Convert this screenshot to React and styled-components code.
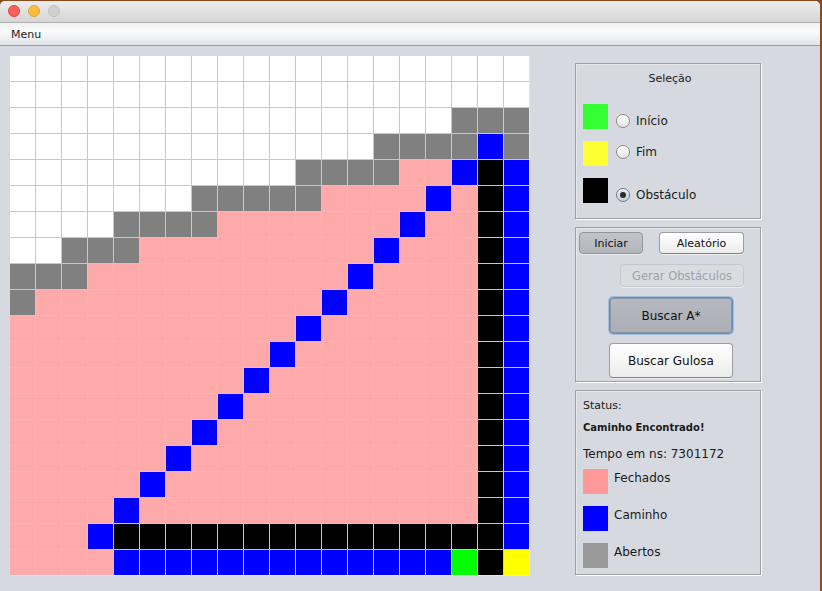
import React from "react";
import styled, { createGlobalStyle, css } from "styled-components";

const GlobalStyle = createGlobalStyle`
  html, body { margin: 0; padding: 0; }
  body {
    background: #8e4a1f;
    width: 822px;
    height: 591px;
    overflow: hidden;
    font-family: "DejaVu Sans", "Liberation Sans", sans-serif;
    color: #1a1a1a;
  }
  * { box-sizing: border-box; }
`;

const COLORS = {
  W: "#ffffff",
  G: "#808080",
  B: "#0000ff",
  K: "#000000",
  P: "#ffaaaa",
  S: "#00ff00",
  Y: "#ffff00",
};

const buildRows = () => {
  const rows = [
    "WWWWWWWWWWWWWWWWWWWW",
    "WWWWWWWWWWWWWWWWWWWW",
    "WWWWWWWWWWWWWWWWWGGG",
    "WWWWWWWWWWWWWWGGGGBG",
    "WWWWWWWWWWWGGGGPPBKB",
    "WWWWWWWGGGGGPPPPBPKB",
    "WWWWGGGGPPPPPPPBPPKB",
    "WWGGGPPPPPPPPPBPPPKB",
    "GGGPPPPPPPPPPBPPPPKB",
    "GPPPPPPPPPPPBPPPPPKB",
  ];
  for (let r = 10; r <= 17; r++) {
    const blue = 21 - r;
    let s = "";
    for (let c = 0; c < 18; c++) s += c === blue ? "B" : "P";
    rows.push(s + "KB");
  }
  rows.push("PPPBKKKKKKKKKKKKKKKB");
  rows.push("PPPPBBBBBBBBBBBBBSKY");
  return rows;
};

const GRID = buildRows();

const Window = styled.div`
  width: 820px;
  height: 590px;
  margin-top: 1px;
  background: #d6d9e0;
  border-top-left-radius: 5px;
  border-top-right-radius: 5px;
  overflow: hidden;
  display: flex;
  flex-direction: column;
`;

const TitleBar = styled.div`
  height: 22px;
  flex: none;
  display: flex;
  align-items: center;
  gap: 8px;
  padding-left: 8px;
  padding-bottom: 1px;
  background: linear-gradient(#ededed, #d5d5d5);
  border-bottom: 1px solid #b1b1b1;
`;

const Light = styled.span`
  width: 12px;
  height: 12px;
  border-radius: 50%;
  background: ${(p) => p.$color};
  border: 1px solid ${(p) => p.$edge};
`;

const MenuBar = styled.div`
  height: 23px;
  flex: none;
  display: flex;
  align-items: center;
  padding-left: 11px;
  font-size: 11px;
  color: #222;
  background: linear-gradient(#eef0f1, #fbfcfc 35%, #e9ebee 80%, #dfe2e6);
  border-bottom: 1px solid #979ba3;
`;

const Content = styled.div`
  flex: 1;
  display: flex;
  align-items: flex-start;
  padding: 10px 0 0 10px;
`;

const Board = styled.div`
  display: grid;
  grid-template-columns: repeat(20, 25px);
  grid-auto-rows: 25px;
  gap: 1px;
  background: #c8c8c8;
  box-shadow: 1px 1px 0 #e4e6ea;
`;

const Cell = styled.div`
  background: ${(p) => p.$color};
`;

const Side = styled.div`
  width: 186px;
  margin-left: 46px;
  margin-top: 7px;
  display: flex;
  flex-direction: column;
  gap: 8px;
`;

const Panel = styled.div`
  height: ${(p) => p.$h}px;
  border: 1px solid #9f9f9f;
  box-shadow: 1px 1px 0 #ffffff, inset 1px 1px 0 #e6e8ec;
  display: flex;
  flex-direction: column;
`;

const PanelTitle = styled.div`
  font-size: 11px;
  line-height: 13px;
  text-align: center;
  margin-top: 8px;
  padding-left: 4px;
`;

const SelectList = styled.div`
  display: flex;
  flex-direction: column;
  gap: 12px;
  margin-top: 19px;
  padding-left: 7px;
`;

const SelectRow = styled.div`
  display: flex;
  align-items: flex-start;
`;

const Swatch = styled.div`
  width: 25px;
  height: 25px;
  flex: none;
  background: ${(p) => p.$color};
`;

const RadioOption = styled.label`
  display: flex;
  align-items: center;
  margin-left: 8px;
  margin-top: ${(p) => p.$offset}px;
  font-size: 12px;
  line-height: 14px;
  gap: 6px;
`;

const RadioDot = styled.span`
  width: 14px;
  height: 14px;
  border-radius: 50%;
  border: 1px solid #8b8b8b;
  background: linear-gradient(#ffffff, #e3e3e3);
  display: flex;
  align-items: center;
  justify-content: center;
  box-shadow: inset 0 1px 1px rgba(255, 255, 255, 0.8);
  ${(p) =>
    p.$checked &&
    css`
      background: linear-gradient(#e4ebf3, #c3cedb);
      border-color: #6f7a88;
      &::after {
        content: "";
        width: 6px;
        height: 6px;
        border-radius: 50%;
        background: #2a2a2a;
      }
    `}
`;

const ButtonArea = styled.div`
  display: flex;
  flex-direction: column;
  align-items: flex-start;
  padding-top: 4px;
`;

const ButtonRow = styled.div`
  display: flex;
  gap: 16px;
  padding-left: 3px;
`;

const Button = styled.div`
  width: ${(p) => p.$w}px;
  height: ${(p) => p.$h}px;
  margin-left: ${(p) => p.$left || 0}px;
  margin-top: ${(p) => p.$top || 0}px;
  display: flex;
  align-items: center;
  justify-content: center;
  font-size: ${(p) => p.$fs || 12}px;
  border-radius: 4px;
  color: #111;
  border: 1px solid #9d9d9d;
  border-bottom-color: #838383;
  background: linear-gradient(#ffffff, #f6f6f6 50%, #ececec);
  box-shadow: 0 1px 0 rgba(255, 255, 255, 0.5);
  ${(p) =>
    p.$variant === "pressed" &&
    css`
      background: linear-gradient(#c1c4c9, #b3b6bc);
      border-color: #949799;
    `}
  ${(p) =>
    p.$variant === "disabled" &&
    css`
      background: #d9dce1;
      border-color: #c5c7cb;
      color: #9fa2a7;
    `}
  ${(p) =>
    p.$variant === "default" &&
    css`
      background: linear-gradient(#b6b9bf, #abaeb4);
      border: 1px solid #5f8fc7;
      box-shadow: 0 0 0 1px #9ebde3, inset 0 0 0 1px #8e939c;
    `}
`;

const StatusArea = styled.div`
  display: flex;
  flex-direction: column;
  padding: 8px 0 0 7px;
`;

const StatusLabel = styled.div`
  font-size: 11px;
  line-height: 13px;
`;

const StatusMessage = styled.div`
  font-size: 10px;
  line-height: 12px;
  font-weight: bold;
  margin-top: 10px;
`;

const TimeLabel = styled.div`
  font-size: 12px;
  line-height: 14px;
  margin-top: 13px;
`;

const Legend = styled.div`
  display: flex;
  flex-direction: column;
  gap: 12px;
  margin-top: 8px;
`;

const LegendRow = styled.div`
  display: flex;
  align-items: flex-start;
`;

const LegendText = styled.span`
  font-size: 12px;
  line-height: 14px;
  margin: 2px 0 0 6px;
`;

export default function App() {
  return (
    <>
      <GlobalStyle />
      <Window>
        <TitleBar>
          <Light $color="#fc605c" $edge="#e0443e" />
          <Light $color="#fdbc40" $edge="#dea236" />
          <Light $color="#d0d0d0" $edge="#bdbdbd" />
        </TitleBar>
        <MenuBar>Menu</MenuBar>
        <Content>
          <Board>
            {GRID.map((row, r) =>
              row.split("").map((ch, c) => <Cell key={r + "-" + c} $color={COLORS[ch]} />)
            )}
          </Board>
          <Side>
            <Panel $h={156}>
              <PanelTitle>Seleção</PanelTitle>
              <SelectList>
                <SelectRow>
                  <Swatch $color="#33ff33" />
                  <RadioOption $offset={10}>
                    <RadioDot />
                    Início
                  </RadioOption>
                </SelectRow>
                <SelectRow>
                  <Swatch $color="#ffff33" />
                  <RadioOption $offset={4}>
                    <RadioDot />
                    Fim
                  </RadioOption>
                </SelectRow>
                <SelectRow>
                  <Swatch $color="#000000" />
                  <RadioOption $offset={10}>
                    <RadioDot $checked />
                    Obstáculo
                  </RadioOption>
                </SelectRow>
              </SelectList>
            </Panel>
            <Panel $h={155}>
              <ButtonArea>
                <ButtonRow>
                  <Button $w={64} $h={22} $fs={11} $variant="pressed">Iniciar</Button>
                  <Button $w={85} $h={22} $fs={11}>Aleatório</Button>
                </ButtonRow>
                <Button $w={124} $h={23} $fs={11.5} $left={44} $top={10} $variant="disabled">
                  Gerar Obstáculos
                </Button>
                <Button $w={124} $h={37} $left={33} $top={10} $variant="default">
                  Buscar A*
                </Button>
                <Button $w={124} $h={35} $left={33} $top={9}>
                  Buscar Gulosa
                </Button>
              </ButtonArea>
            </Panel>
            <Panel $h={185}>
              <StatusArea>
                <StatusLabel>Status:</StatusLabel>
                <StatusMessage>Caminho Encontrado!</StatusMessage>
                <TimeLabel>Tempo em ns: 7301172</TimeLabel>
                <Legend>
                  <LegendRow>
                    <Swatch $color="#ff9999" />
                    <LegendText>Fechados</LegendText>
                  </LegendRow>
                  <LegendRow>
                    <Swatch $color="#0000ff" />
                    <LegendText>Caminho</LegendText>
                  </LegendRow>
                  <LegendRow>
                    <Swatch $color="#999999" />
                    <LegendText>Abertos</LegendText>
                  </LegendRow>
                </Legend>
              </StatusArea>
            </Panel>
          </Side>
        </Content>
      </Window>
    </>
  );
}
